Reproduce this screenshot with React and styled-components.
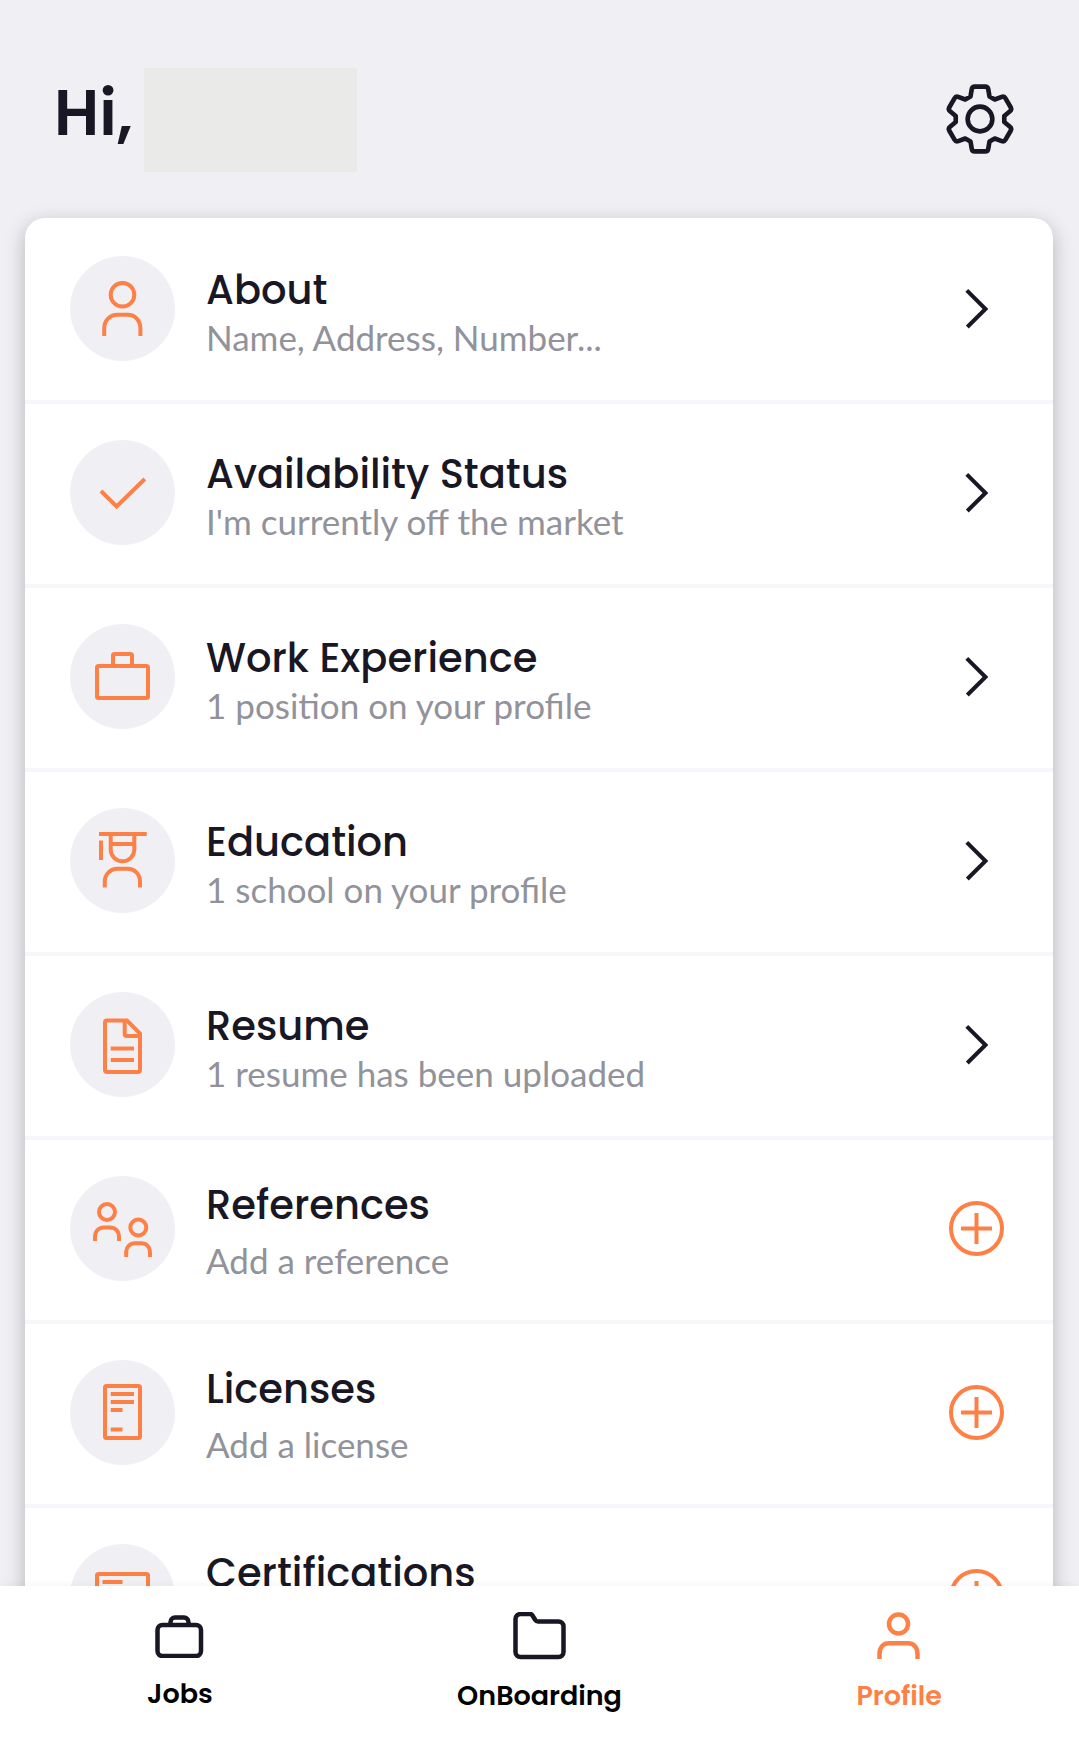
import React from "react";
import styled, { createGlobalStyle } from "styled-components";

// one tooth of the gear, repeated every 60 degrees
const tooth = [
  ["L", -9.2, -21.9],
  ["L", -8, -29],
  ["Q", -7.6, -31.5],
  ["", -5, -31.5],
  ["L", 5, -31.5],
  ["Q", 7.6, -31.5],
  ["", 8, -29],
  ["L", 9.2, -21.9],
];

const gearPath =
  [0, 1, 2, 3, 4, 5]
    .map((k) => {
      const a = (k * Math.PI) / 3;
      return tooth
        .map(([cmd, x, y], i) => {
          const px = x * Math.cos(a) - y * Math.sin(a);
          const py = x * Math.sin(a) + y * Math.cos(a);
          const c = k === 0 && i === 0 ? "M" : cmd;
          return `${c}${px.toFixed(2)} ${py.toFixed(2)}`;
        })
        .join(" ");
    })
    .join(" ") + "Z";

const icons = {
  person: (
    <>
      <circle cx="27.5" cy="13.8" r="11.8" />
      <path d="M9.2 55V47.5C9.2 39.5 15 33.8 22.5 33.8H32.5C40 33.8 45.4 39.5 45.4 47.5V55" />
    </>
  ),
  check: <path d="M6 26L21.6 41.5L49.8 14" />,
  briefcase: (
    <>
      <rect x="2" y="17" width="51" height="32" rx="1.5" />
      <path d="M18 17V6.5A1.5 1.5 0 0 1 19.5 5H35.5A1.5 1.5 0 0 1 37 6.5V17" />
    </>
  ),
  graduate: (
    <>
      <path d="M4 1H51.7M6 7.5V27M15.7 11H39.3" />
      <path d="M15.7 1V16.5A11.8 11.8 0 0 0 39.3 16.5V1" />
      <path d="M9.8 54.5V48.5C9.8 41 15.5 35.8 22.5 35.8H32.5C39.5 35.8 45 41 45 48.5V54.5" />
    </>
  ),
  document: (
    <>
      <path d="M12 3.5H32L45 16.5V53A2 2 0 0 1 43 55H12A2 2 0 0 1 10 53V5.5A2 2 0 0 1 12 3.5Z" />
      <path d="M29.7 3.5V17A2 2 0 0 0 31.7 19H45M15.7 31.5H39M15.7 43H39" />
    </>
  ),
  people: (
    <>
      <circle cx="12" cy="11" r="8" />
      <path d="M0 40V36C0 30 4 26.5 9 26.5H15C20 26.5 24 30 24 36V40" />
      <circle cx="43.3" cy="26.5" r="8" />
      <path d="M31.2 56V52C31.2 46 35 42.2 40.2 42.2H46.2C51.5 42.2 55 46 55 52V56" />
    </>
  ),
  license: (
    <>
      <rect x="10" y="1" width="35" height="52" rx="1.5" />
      <path d="M15.7 9H39M15.7 17H39M15.7 25H27.5M15.7 44.5H27.5" />
    </>
  ),
  certificate: (
    <>
      <rect x="2" y="5" width="51" height="40" rx="1.5" />
      <path d="M7.5 13H27.5M7.5 21H27.5" />
    </>
  ),
  chevron: <path d="M17.8 9.3L36.5 28L18.3 46" />,
  plus: (
    <>
      <circle cx="27.5" cy="27.5" r="25.5" />
      <path d="M27.5 12V43M12 27.5H43" />
    </>
  ),
};

const sections = [
  { icon: "person", title: "About", text: "Name, Address, Number..." },
  { icon: "check", title: "Availability Status", text: "I'm currently off the market" },
  { icon: "briefcase", title: "Work Experience", text: "1 position on your profile" },
  { icon: "graduate", title: "Education", text: "1 school on your profile" },
  { icon: "document", title: "Resume", text: "1 resume has been uploaded" },
  { icon: "people", title: "References", text: "Add a reference", empty: true },
  { icon: "license", title: "Licenses", text: "Add a license", empty: true },
  { icon: "certificate", title: "Certifications", text: "Add a certification", empty: true },
];

function App() {
  return (
    <Screen>
      <GlobalStyle />
      <Content>
        <Header>
          <Greeting>Hi,</Greeting>
          <NameBlock />
          <SettingsButton aria-label="Settings">
            <svg width="70" height="70" viewBox="-34 -34 68 68">
              <path d={gearPath} />
              <circle r="12" />
            </svg>
          </SettingsButton>
        </Header>
        <Card>
          {sections.map((s) => (
            <Row key={s.title} href="#">
              <IconCircle>
                <Icon viewBox="0 0 55 55">{icons[s.icon]}</Icon>
              </IconCircle>
              <RowText $empty={s.empty}>
                <RowTitle>{s.title}</RowTitle>
                <RowSub>{s.text}</RowSub>
              </RowText>
              <Icon viewBox="0 0 55 55" $dark={!s.empty}>
                {s.empty ? icons.plus : icons.chevron}
              </Icon>
            </Row>
          ))}
        </Card>
      </Content>
      <TabBar>
        <Tab href="#">
          <TabIcon width="56" height="46" viewBox="0 0 56 46">
            <rect x="5.5" y="13" width="43.5" height="31" rx="5" />
            <path d="M18.5 13V10A4.500 4.500 0 0 1 23 5.500H32A4.500 4.500 0 0 1 36.500 10V13" />
          </TabIcon>
          Jobs
        </Tab>
        <Tab href="#">
          <TabIcon width="56" height="48" viewBox="0 0 56 48">
            <path d="M8.5 2H18C19 2 19.800 2.500 20.300 3.300L23.300 8C24 9 24.800 9.500 26 9.500H46.500A5 5 0 0 1 51.500 14.500V40A5 5 0 0 1 46.500 45H8.500A5 5 0 0 1 3.500 40V7A5 5 0 0 1 8.500 2Z" />
          </TabIcon>
          OnBoarding
        </Tab>
        <Tab href="#" $active>
          <TabIcon width="56" height="48" viewBox="0 0 56 48">
            <circle cx="27.5" cy="12" r="9.5" />
            <path d="M8.500 47V42C8.500 35 12.500 31.200 18 31.200H37C42.500 31.200 46.500 35 46.500 42V47" />
          </TabIcon>
          Profile
        </Tab>
      </TabBar>
    </Screen>
  );
}

export default App;

const GlobalStyle = createGlobalStyle`
  * {
    box-sizing: border-box;
  }
  body {
    margin: 0;
    background-color: #f0eff4;
    font-family: Poppins, Inter, sans-serif;
    color: #191724;
  }
`;

const Screen = styled.div`
  display: flex;
  flex-direction: column;
  height: 100vh;
`;

const Content = styled.main`
  flex: 1;
  min-height: 0;
  overflow-y: auto;
  scrollbar-width: none;
  padding: 68px 26px 0 25px;
`;

const Header = styled.header`
  display: flex;
  align-items: center;
  height: 104px;
  margin-bottom: 46px;
  padding: 0 38px 0 29px;
`;

const Greeting = styled.h1`
  width: 90px;
  margin: 0;
  padding-bottom: 14px;
  font-size: 63px;
  font-weight: 600;
  line-height: 72px;
`;

const NameBlock = styled.div`
  width: 213px;
  height: 104px;
  background-color: #eaeae8;
`;

const SettingsButton = styled.button`
  display: flex;
  margin-left: auto;
  padding: 0 0 2px;
  border: none;
  background: none;
  cursor: pointer;

  svg {
    fill: none;
    stroke: #191724;
    stroke-width: 4.5;
    stroke-linejoin: round;
  }
`;

const Card = styled.nav`
  padding-top: 2px;
  border-radius: 20px 20px 0 0;
  background-color: white;
  box-shadow: 0 6px 20px rgba(0, 0, 0, 0.25);
`;

const Row = styled.a`
  display: flex;
  align-items: center;
  height: 184px;
  padding: 0 49px 3px 45px;
  border-bottom: 4px solid #f7f7fb;
  color: inherit;
  text-decoration: none;
`;

const IconCircle = styled.div`
  display: flex;
  align-items: center;
  justify-content: center;
  width: 105px;
  height: 105px;
  margin-right: 31px;
  border-radius: 50%;
  background-color: #f0eff4;
`;

const Icon = styled.svg`
  width: 55px;
  height: 55px;
  overflow: visible;
  fill: none;
  stroke: ${(props) => (props.$dark ? "#191724" : "#fd8046")};
  stroke-width: 4;
`;

const RowText = styled.div`
  display: flex;
  flex: 1;
  flex-direction: column;
  gap: ${(props) => (props.$empty ? "8px" : "0")};
  padding-top: ${(props) => (props.$empty ? "6px" : "8px")};
`;

const RowTitle = styled.span`
  font-size: 40px;
  font-weight: 500;
  line-height: 48px;
`;

const RowSub = styled.span`
  color: #92929b;
  font-family: Lato, sans-serif;
  font-size: 35px;
  line-height: 46px;
`;

const TabBar = styled.nav`
  z-index: 1;
  display: flex;
  height: 155px;
  padding-top: 26px;
  background-color: white;
  box-shadow: 0 0 10px rgba(0, 0, 0, 0.05);
`;

const Tab = styled.a`
  display: flex;
  flex: 1;
  flex-direction: column;
  align-items: center;
  gap: 19px;
  color: ${(props) => (props.$active ? "#fd8046" : "black")};
  font-size: 27px;
  font-weight: 600;
  line-height: 34px;
  text-decoration: none;

  svg {
    stroke: ${(props) => (props.$active ? "#fd8046" : "#191724")};
  }
`;

const TabIcon = styled.svg`
  fill: none;
  stroke-width: 4.5;
`;
